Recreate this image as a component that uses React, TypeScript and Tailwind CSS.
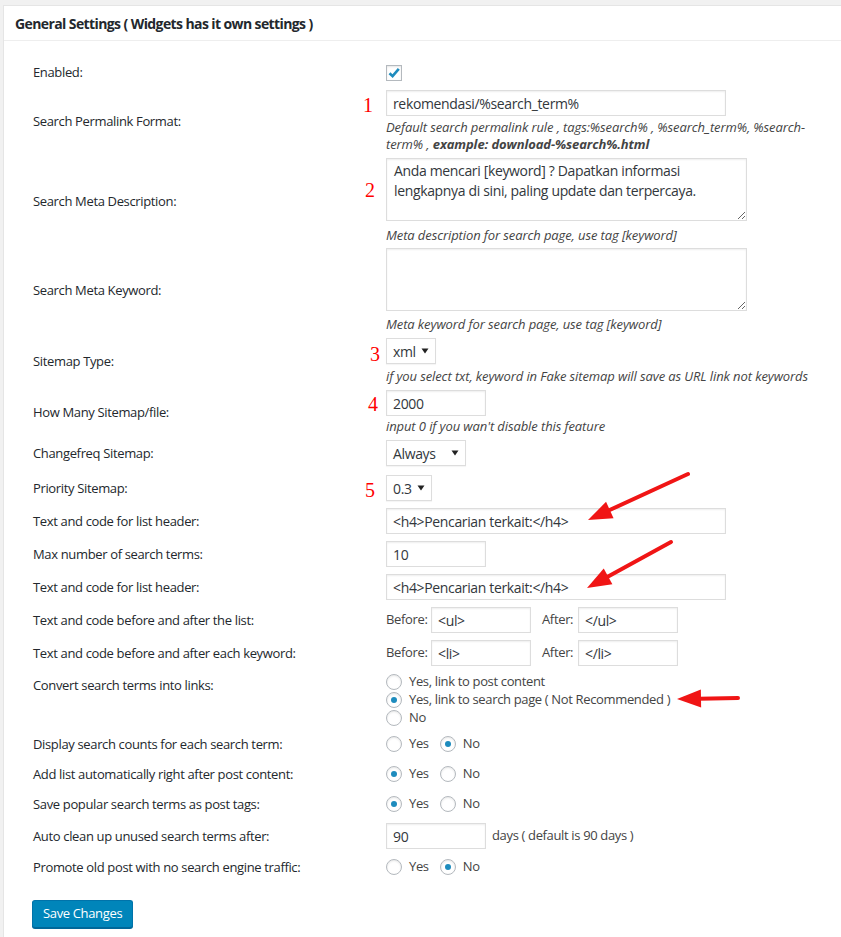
import React from "react";

const font = { fontFamily: '"Open Sans", "Noto Sans", sans-serif' };

function Num({ n, className }: { n: string; className: string }) {
  return (
    <span
      className={"absolute text-[20px] leading-none tracking-normal text-[#ff0000] " + className}
      style={{ fontFamily: '"Liberation Serif", serif' }}
    >
      {n}
    </span>
  );
}

function Row({
  label,
  children,
  className = "",
  labelClass = "",
}: {
  label: string;
  children: React.ReactNode;
  className?: string;
  labelClass?: string;
}) {
  return (
    <div className={"flex items-center " + className}>
      <div className={"w-[353px] shrink-0 text-[13px] leading-[17px] text-[#23282d] " + labelClass}>
        {label}
      </div>
      <div className="relative">{children}</div>
    </div>
  );
}

function TextInput({ value, w }: { value: string; w: string }) {
  return (
    <input
      readOnly
      value={value}
      className={
        "h-[26px] border border-[#ddd] bg-white px-[6px] text-[14px] text-[#32373c] shadow-[inset_0_1px_2px_rgba(0,0,0,0.07)] outline-none " +
        w
      }
      style={font}
    />
  );
}

function Select({ value, w }: { value: string; w: string }) {
  return (
    <div
      className={
        "flex h-[26px] items-center justify-between border border-[#ddd] bg-white pl-[6px] pr-[6px] text-[14px] text-[#32373c] shadow-[0_1px_1px_rgba(0,0,0,0.04)] " +
        w
      }
    >
      <span>{value}</span>
      <svg width="8" height="6" viewBox="0 0 8 6">
        <path d="M0.5 0.5 L7.5 0.5 L4 5.5 Z" fill="#222" />
      </svg>
    </div>
  );
}

function Radio({ checked }: { checked?: boolean }) {
  return (
    <span className="flex h-[16px] w-[16px] shrink-0 items-center justify-center rounded-full border border-[#b4b9be] bg-white shadow-[inset_0_1px_2px_rgba(0,0,0,0.1)]">
      {checked && <span className="h-[6px] w-[6px] rounded-full bg-[#1e8cbe]" />}
    </span>
  );
}

function YesNo({ yes }: { yes: boolean }) {
  return (
    <div className="flex h-[18px] items-center text-[13px] text-[#444]">
      <Radio checked={yes} />
      <span className="ml-[7px]">Yes</span>
      <span className="ml-[11px]">
        <Radio checked={!yes} />
      </span>
      <span className="ml-[7px]">No</span>
    </div>
  );
}

function Desc({ children, className = "" }: { children: React.ReactNode; className?: string }) {
  return (
    <div className={"whitespace-nowrap text-[13px] italic leading-[17px] tracking-[-0.1px] text-[#444] " + className}>
      {children}
    </div>
  );
}

function arrow(x1: number, y1: number, x2: number, y2: number) {
  const dx = x2 - x1;
  const dy = y2 - y1;
  const len = Math.hypot(dx, dy);
  const ux = dx / len;
  const uy = dy / len;
  const nx = -uy;
  const ny = ux;
  const hl = 24;
  const hw = 9;
  const bx = x2 - ux * hl;
  const by = y2 - uy * hl;
  return (
    <g key={x1 + "-" + y1}>
      <line x1={x1} y1={y1} x2={bx + ux * 2} y2={by + uy * 2} stroke="#f01515" strokeWidth="4" strokeLinecap="round" />
      <polygon
        points={`${x2},${y2} ${bx + nx * hw},${by + ny * hw} ${bx - nx * hw},${by - ny * hw}`}
        fill="#f01515"
      />
    </g>
  );
}

export default function App() {
  return (
    <div className="relative h-[937px] w-[841px] overflow-hidden bg-[#f1f1f1] tracking-[-0.35px]" style={font}>
      <div className="ml-[3px] mt-[5px] h-[960px] w-[860px] border border-[#e5e5e5] bg-white">
        <div className="flex h-[35px] items-center border-b border-[#eee] pl-[11px] text-[14px] font-bold tracking-[-0.6px] text-[#23282d]">
          General Settings ( Widgets has it own settings )
        </div>

        <div className="pl-[29px] pt-[23px]">
          <Row label="Enabled:">
            <span className="flex h-[16px] w-[16px] items-center justify-center border border-[#b4b9be] bg-white shadow-[inset_0_1px_2px_rgba(0,0,0,0.1)]">
              <svg width="14" height="14" viewBox="0 0 14 14">
                <path d="M2.5 7.2 L5.6 10.2 L11.8 2.8" fill="none" stroke="#1e8cbe" strokeWidth="2.6" />
              </svg>
            </span>
          </Row>

          <Row label="Search Permalink Format:" className="mt-[9px]">
            <Num n="1" className="-left-[23px] top-[5px]" />
            <TextInput value="rekomendasi/%search_term%" w="w-[340px]" />
            <Desc className="mt-[3px]">
              Default search permalink rule , tags:%search% , %search_term%, %search-
              <br />
              term% , <b>example: download-%search%.html</b>
            </Desc>
          </Row>

          <Row label="Search Meta Description:" className="mt-[5px]">
            <Num n="2" className="-left-[21px] top-[22px]" />
            <textarea
              readOnly
              value={"Anda mencari [keyword] ? Dapatkan informasi lengkapnya di sini, paling update dan terpercaya."}
              className="block h-[63px] w-[361px] border border-[#ddd] bg-white px-[7px] py-[2px] text-[14px] leading-[20px] text-[#32373c] shadow-[inset_0_1px_2px_rgba(0,0,0,0.07)] outline-none"
              style={font}
            />
            <Desc className="mt-[6px]">Meta description for search page, use tag [keyword]</Desc>
          </Row>

          <Row label="Search Meta Keyword:" className="mt-[4px]">
            <textarea
              readOnly
              value=""
              className="block h-[63px] w-[361px] border border-[#ddd] bg-white px-[7px] py-[2px] text-[14px] text-[#32373c] shadow-[inset_0_1px_2px_rgba(0,0,0,0.07)] outline-none"
              style={font}
            />
            <Desc className="mt-[5px]">Meta keyword for search page, use tag [keyword]</Desc>
          </Row>

          <Row label="Sitemap Type:" className="mt-[5px]">
            <Num n="3" className="-left-[16px] top-[6px]" />
            <Select value="xml" w="w-[50px]" />
            <Desc className="mt-[4px]">if you select txt, keyword in Fake sitemap will save as URL link not keywords</Desc>
          </Row>

          <Row label="How Many Sitemap/file:" className="mt-[5px]">
            <Num n="4" className="-left-[18px] top-[4px]" />
            <TextInput value="2000" w="w-[100px]" />
            <Desc className="mt-[2px]">input 0 if you wan't disable this feature</Desc>
          </Row>

          <Row label="Changefreq Sitemap:" className="mt-[5px]">
            <Select value="Always" w="w-[80px]" />
          </Row>

          <Row label="Priority Sitemap:" className="mt-[9px]">
            <Num n="5" className="-left-[21px] top-[5px]" />
            <Select value="0.3" w="w-[46px]" />
          </Row>

          <Row label="Text and code for list header:" className="mt-[7px]">
            <TextInput value="<h4>Pencarian terkait:</h4>" w="w-[340px]" />
          </Row>

          <Row label="Max number of search terms:" className="mt-[7px]">
            <TextInput value="10" w="w-[100px]" />
          </Row>

          <Row label="Text and code for list header:" className="mt-[7px]">
            <TextInput value="<h4>Pencarian terkait:</h4>" w="w-[340px]" />
          </Row>

          <Row label="Text and code before and after the list:" className="mt-[7px]">
            <div className="flex items-center text-[13px] text-[#444]">
              <span className="w-[45px]">Before:</span>
              <TextInput value="<ul>" w="w-[100px]" />
              <span className="ml-[11px] w-[36px]">After:</span>
              <TextInput value="</ul>" w="w-[100px]" />
            </div>
          </Row>

          <Row label="Text and code before and after each keyword:" className="mt-[7px]">
            <div className="flex items-center text-[13px] text-[#444]">
              <span className="w-[45px]">Before:</span>
              <TextInput value="<li>" w="w-[100px]" />
              <span className="ml-[11px] w-[36px]">After:</span>
              <TextInput value="</li>" w="w-[100px]" />
            </div>
          </Row>

          <Row label="Convert search terms into links:" className="mt-[7px] !items-start" labelClass="pt-[4px]">
            <div className="text-[13px] text-[#444]">
              <div className="flex h-[18px] items-center">
                <Radio />
                <span className="ml-[7px]">Yes, link to post content</span>
              </div>
              <div className="flex h-[18px] items-center">
                <Radio checked />
                <span className="ml-[7px]">Yes, link to search page ( Not Recommended )</span>
              </div>
              <div className="flex h-[18px] items-center">
                <Radio />
                <span className="ml-[7px]">No</span>
              </div>
            </div>
          </Row>

          <Row label="Display search counts for each search term:" className="mt-[8px]">
            <YesNo yes={false} />
          </Row>

          <Row label="Add list automatically right after post content:" className="mt-[12px]">
            <YesNo yes={true} />
          </Row>

          <Row label="Save popular search terms as post tags:" className="mt-[12px]">
            <YesNo yes={true} />
          </Row>

          <Row label="Auto clean up unused search terms after:" className="mt-[10px]">
            <div className="flex items-center text-[13px] text-[#444]">
              <TextInput value="90" w="w-[100px]" />
              <span className="ml-[6px]">days ( default is 90 days )</span>
            </div>
          </Row>

          <Row label="Promote old post with no search engine traffic:" className="mt-[9px]">
            <YesNo yes={false} />
          </Row>

          <button className="-ml-[1px] mt-[24px] h-[28px] rounded-[3px] border border-[#0073aa] border-b-[#006799] bg-[#0085ba] px-[10px] text-[13px] text-white shadow-[0_1px_0_#006799]">
            Save Changes
          </button>
        </div>
      </div>

      <svg className="pointer-events-none absolute left-0 top-0" width="841" height="937">
        {arrow(688, 474, 588, 520)}
        {arrow(671, 542, 587, 588)}
        {arrow(738, 698, 677, 699)}
      </svg>
    </div>
  );
}
